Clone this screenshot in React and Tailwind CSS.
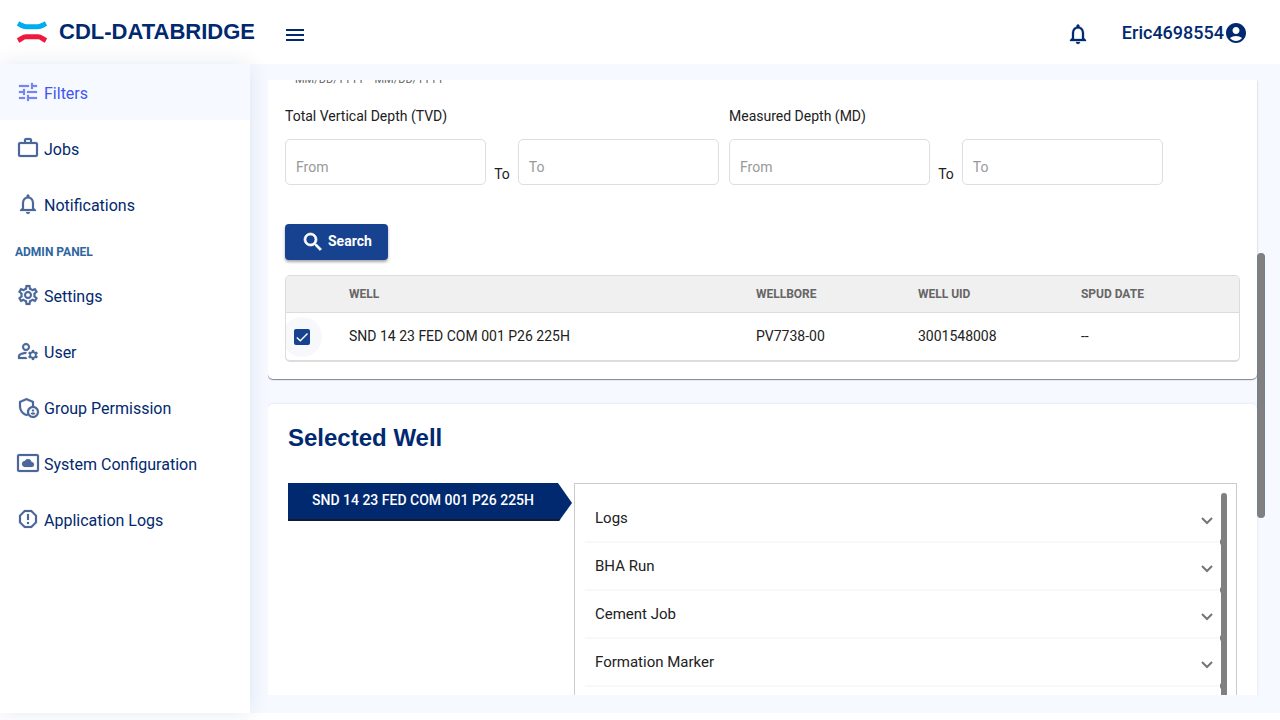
import React from "react";
import {
  MdTune, MdWorkOutline, MdNotificationsNone, MdOutlineSettings, MdOutlineManageAccounts,
  MdOutlineAdminPanelSettings, MdSettingsSystemDaydream, MdReportGmailerrorred,
  MdAccountCircle, MdMenu, MdSearch,
} from "react-icons/md";

const mainLinks = [
  { label: "Filters", icon: MdTune, active: true },
  { label: "Jobs", icon: MdWorkOutline },
  { label: "Notifications", icon: MdNotificationsNone },
];

const adminLinks = [
  { label: "Settings", icon: MdOutlineSettings },
  { label: "User", icon: MdOutlineManageAccounts },
  { label: "Group Permission", icon: MdOutlineAdminPanelSettings },
  { label: "System Configuration", icon: MdSettingsSystemDaydream },
  { label: "Application Logs", icon: MdReportGmailerrorred },
];

const sections = ["Logs", "BHA Run", "Cement Job", "Formation Marker", "Fluids Report"];

function Logo() {
  return (
    <svg width="32" height="24" viewBox="0 0 32 24" fill="none" strokeWidth="5" aria-hidden="true">
      <path d="M2 3.5 C6 5.5 7 6.7 10 6.7 H22 C25 6.7 26 5.5 30 3.5" stroke="#00aeef" />
      <path d="M2 20.5 C6 18.5 7 16.8 10 16.8 H22 C25 16.8 26 18.5 30 20.5" stroke="#ed1a3b" />
    </svg>
  );
}

function NavLink({ item }) {
  const Icon = item.icon;
  return (
    <li>
      <a
        href="#"
        className={
          item.active
            ? "flex h-14 items-center gap-1 bg-[#f6f9ff] px-4 text-base text-[#4154f1]"
            : "flex h-14 items-center gap-1 px-4 text-base text-[#012970]"
        }
      >
        <Icon className="size-6 shrink-0 stroke-[0.2] opacity-70 [&_path[fill=none]]:stroke-none" />
        <span className="pt-1">{item.label}</span>
      </a>
    </li>
  );
}

function DepthRange({ title, id }) {
  const box =
    "h-[46px] min-w-0 flex-1 rounded-[5px] border border-[#dedede] bg-white px-[10px] pt-[10px] text-sm text-black placeholder:text-[#999]";
  return (
    <fieldset className="min-w-0 flex-1">
      <legend className="mb-[13px] text-sm leading-5">{title}</legend>
      <div className="flex items-end gap-2">
        <input id={id + "-from"} aria-label={title + " from"} placeholder="From" className={box} />
        <label htmlFor={id + "-to"} className="text-sm leading-[22px]">To</label>
        <input id={id + "-to"} placeholder="To" className={box} />
      </div>
    </fieldset>
  );
}

export default function App() {
  return (
    <div className="flex h-screen flex-col overflow-hidden bg-white font-['Roboto',sans-serif] text-[#212121]">
      <header className="flex h-16 shrink-0 items-center bg-white pr-8 pl-4 text-[#012970]">
        <Logo />
        <span className="ml-[11px] pb-px font-['Liberation_Sans',Arial,sans-serif] text-[22px] leading-8 font-bold">
          CDL-DATABRIDGE
        </span>
        <button aria-label="Toggle menu" className="ml-7 pt-1.5">
          <MdMenu className="size-6" />
        </button>
        <button aria-label="Notifications" className="mr-8 ml-auto pt-1">
          <MdNotificationsNone className="size-6 stroke-[0.3] [&_path[fill=none]]:stroke-none" />
        </button>
        <button className="flex items-center pt-0.5 text-lg font-medium">
          Eric4698554
          <MdAccountCircle className="size-6" />
        </button>
      </header>

      <div className="mb-[7px] flex min-h-0 flex-1">
        <nav className="relative w-[250px] shrink-0 bg-white shadow-[0_0_20px_rgba(1,41,112,0.1)]">
          <ul>
            {mainLinks.map((item) => <NavLink key={item.label} item={item} />)}
          </ul>
          <h2 className="px-[15px] pt-3 pb-[7px] text-xs leading-4 font-bold text-[#2f66a0]">ADMIN PANEL</h2>
          <ul>
            {adminLinks.map((item) => <NavLink key={item.label} item={item} />)}
          </ul>
        </nav>

        <main className="flex min-w-0 flex-1 bg-[#f6f9ff] pt-4 pr-[15px] pb-[18px] pl-[18px]">
          <div className="relative flex min-w-0 flex-1 overflow-hidden pr-2">
            <div className="flex min-w-0 flex-1 flex-col gap-[25px]">
              <section className="rounded-b-[5px] bg-white px-[17px] pb-[17px] shadow-[0_1px_1px_rgba(0,0,0,0.45),0_0_3px_rgba(1,41,112,0.12)]">
                <div className="flex h-1 items-end gap-[10px] overflow-hidden px-[10px] text-[11px] leading-2 text-[#666]">
                  <span>MM/DD/YYYY</span>
                  <span>MM/DD/YYYY</span>
                </div>
                <div className="mt-[22px] mr-[77px] flex gap-[10px]">
                  <DepthRange title="Total Vertical Depth (TVD)" id="tvd" />
                  <DepthRange title="Measured Depth (MD)" id="md" />
                </div>
                <button className="mt-[39px] flex h-9 items-center gap-[3px] rounded bg-[#16428f] px-4 text-sm font-bold text-white shadow-[0_2px_3px_rgba(0,0,0,0.35)]">
                  <MdSearch className="size-6 stroke-[0.7] [&_path[fill=none]]:stroke-none" />
                  <span className="pb-0.5">Search</span>
                </button>
                <div className="mt-[15px] overflow-hidden rounded-[5px] border border-b-2 border-[#dcdcdc]">
                  <table className="w-full table-fixed text-left text-sm">
                    <thead className="h-9 border-b border-[#dcdcdc] bg-[#f0f0f0] text-xs text-[#666]">
                      <tr>
                        <td className="w-[63px]" />
                        <th className="w-[42.7%] font-bold">WELL</th>
                        <th className="w-[17%] font-bold">WELLBORE</th>
                        <th className="w-[17.1%] font-bold">WELL UID</th>
                        <th className="font-bold">SPUD DATE</th>
                      </tr>
                    </thead>
                    <tbody>
                      <tr className="h-12">
                        <td className="overflow-hidden p-0">
                          <label className="-mt-0.5 -mb-1 -ml-1 flex size-10 items-center justify-center rounded-full bg-[#f6f8fc]">
                            <span className="grid size-4 place-items-center rounded-[2px] bg-[#16428f]">
                              <input type="checkbox" defaultChecked aria-label="Select well" className="col-start-1 row-start-1 size-4 appearance-none" />
                              <svg viewBox="0 0 16 16" className="pointer-events-none col-start-1 row-start-1 size-4" fill="none" stroke="#fff" strokeWidth="1.4">
                                <path d="M2.8 8.6 L6.3 11.8 L13.5 4.5" />
                              </svg>
                            </span>
                          </label>
                        </td>
                        <td>SND 14 23 FED COM 001 P26 225H</td>
                        <td>PV7738-00</td>
                        <td>3001548008</td>
                        <td>--</td>
                      </tr>
                    </tbody>
                  </table>
                </div>
              </section>

              <section className="rounded-t-[5px] bg-white px-5 pt-[18px] shadow-[0_0_3px_rgba(1,41,112,0.12)]">
                <h1 className="font-['Liberation_Sans',Arial,sans-serif] text-2xl leading-8 font-bold text-[#012970]">
                  Selected Well
                </h1>
                <div className="mt-[29px] flex items-start gap-[2px]">
                  <button className="h-[38px] w-[284px] shrink-0 border-b-2 border-[#111c33] bg-[#012970] pr-[14px] pb-0.5 text-center text-sm font-medium text-white [clip-path:polygon(0_0,270px_0,100%_20px,271px_100%,0_100%)]">
                    SND 14 23 FED COM 001 P26 225H
                  </button>
                  <div className="relative min-w-0 flex-1 border border-[#ccc] px-[10px] pt-[11px]">
                    <ul>
                      {sections.map((name) => (
                        <li key={name} className="relative">
                          <button className="flex h-12 w-full items-center justify-between border-b-2 border-[#f8f8f8] pr-[13px] pl-[10px] text-left text-[15px]">
                            {name}
                            <svg width="12" height="8" viewBox="0 0 12 8" fill="none" stroke="#757575" strokeWidth="2" className="mt-1.5" aria-hidden="true">
                              <path d="M1 1 L6 6 L11 1" />
                            </svg>
                          </button>
                          <span className="absolute right-[2px] -bottom-0.5 h-1.5 w-1 rounded-full bg-[#708090]" />
                        </li>
                      ))}
                    </ul>
                    <div className="absolute top-[9px] right-[9px] bottom-0 w-[6px] rounded-t-full bg-[#808080]" />
                  </div>
                </div>
              </section>
            </div>
            <div className="absolute top-[28.2%] right-0 h-[43%] w-2 rounded-full border-x border-[#708090] bg-[#808080]" />
          </div>
        </main>
      </div>
    </div>
  );
}
